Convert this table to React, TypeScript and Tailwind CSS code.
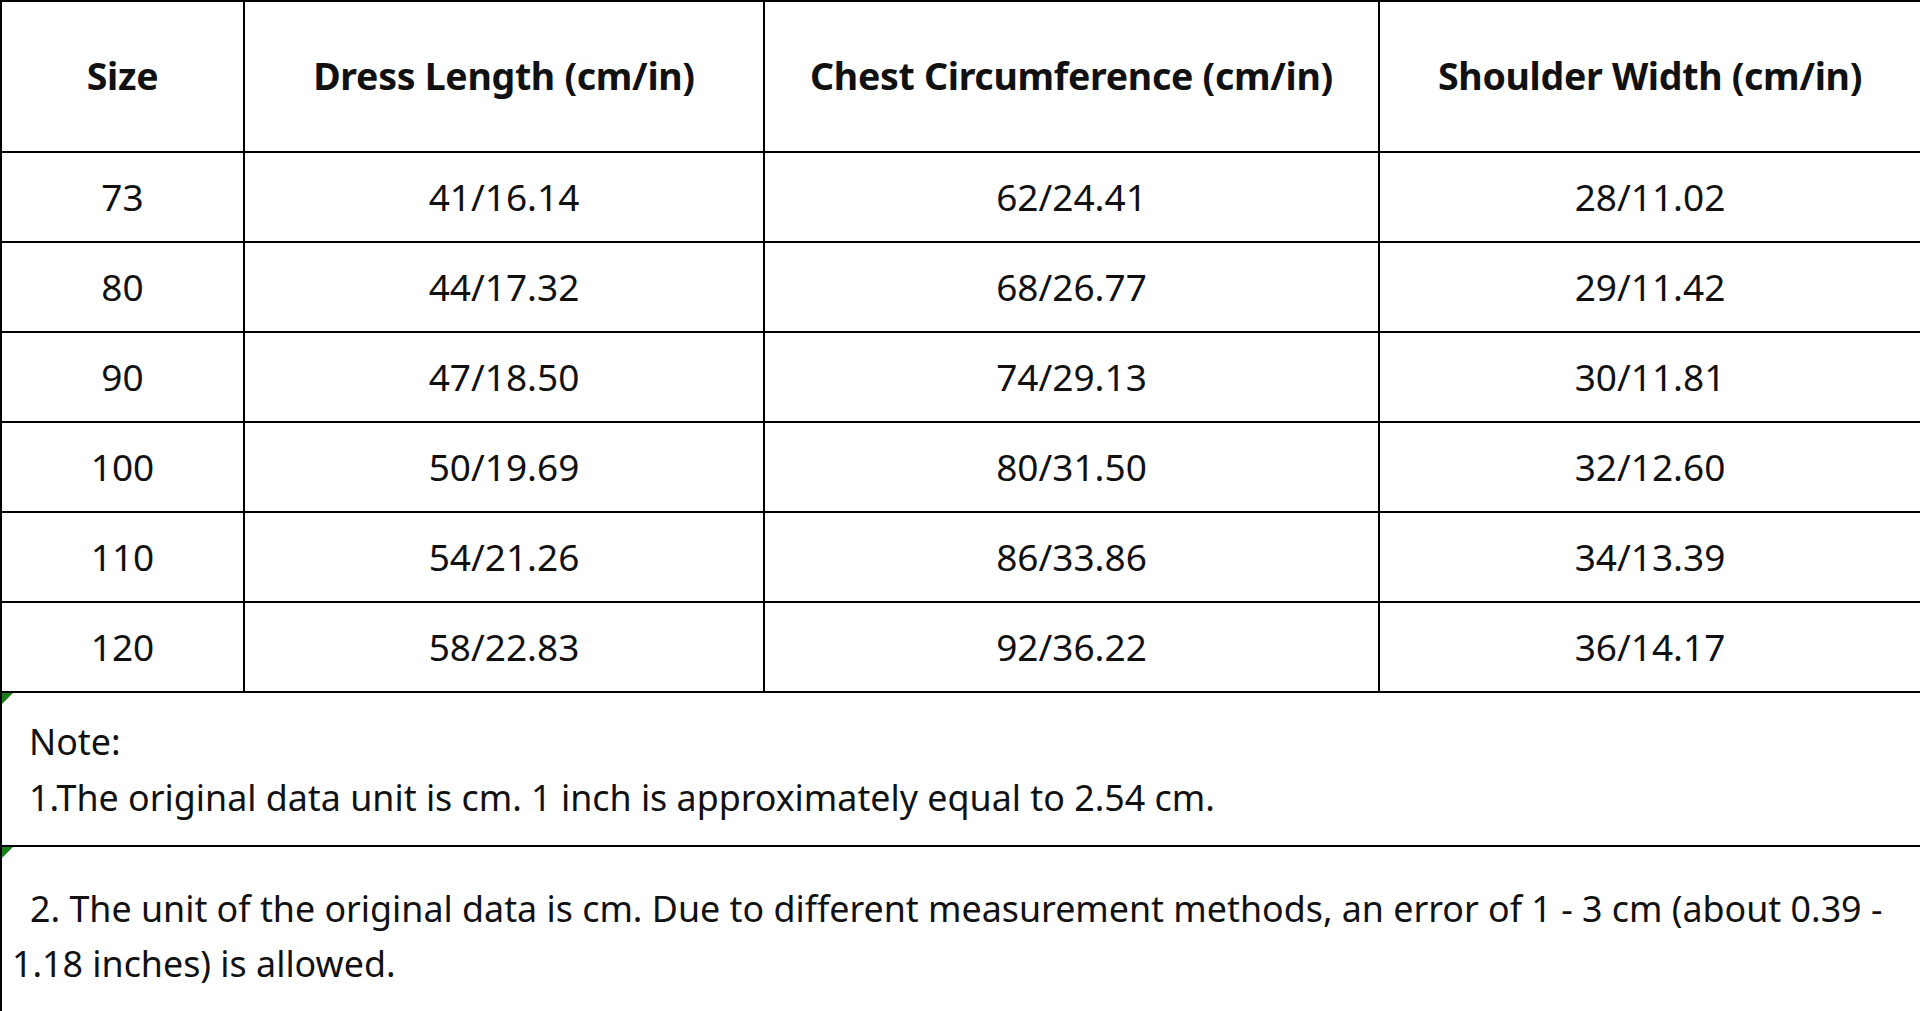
const rows = [
  ['73', '41/16.14', '62/24.41', '28/11.02'],
  ['80', '44/17.32', '68/26.77', '29/11.42'],
  ['90', '47/18.50', '74/29.13', '30/11.81'],
  ['100', '50/19.69', '80/31.50', '32/12.60'],
  ['110', '54/21.26', '86/33.86', '34/13.39'],
  ['120', '58/22.83', '92/36.22', '36/14.17'],
];

const headers = [
  'Size',
  'Dress Length (cm/in)',
  'Chest Circumference (cm/in)',
  'Shoulder Width (cm/in)',
];

function Flag() {
  return (
    <span className="absolute left-0 top-0 w-0 h-0 border-t-[11px] border-t-[#1a7f1a] border-r-[11px] border-r-transparent" />
  );
}

export default function App() {
  return (
    <div className="w-[1920px] h-[1011px] overflow-hidden bg-white text-[#111] font-['Noto_Sans',sans-serif]">
      <div className="grid grid-cols-[241px_518px_613px_1fr] grid-rows-[149px_repeat(6,88px)_152px_177px] gap-[2px] bg-black pt-[2px] pl-[2px]">
        {headers.map((h) => (
          <div key={h} className="bg-white flex items-center justify-center text-[37.5px] font-bold tracking-[-0.3px]">
            {h}
          </div>
        ))}
        {rows.map((r) =>
          r.map((c, i) => (
            <div key={r[0] + i} className="bg-white flex items-center justify-center text-[37px]">
              {c}
            </div>
          ))
        )}
        <div className="relative col-span-4 bg-white flex flex-col justify-center pl-[27px] text-[35.8px] leading-[56px]">
          <Flag />
          <p>Note:</p>
          <p>1.The original data unit is cm. 1 inch is approximately equal to 2.54 cm.</p>
        </div>
        <div className="relative col-span-4 bg-white flex flex-col justify-center pl-[10px] pr-[20px] text-[35.8px] leading-[55px]">
          <Flag />
          <p className="indent-[18px]">
            2. The unit of the original data is cm. Due to different measurement methods, an error of 1 - 3 cm (about 0.39 - 1.18 inches) is allowed.
          </p>
        </div>
      </div>
    </div>
  );
}
